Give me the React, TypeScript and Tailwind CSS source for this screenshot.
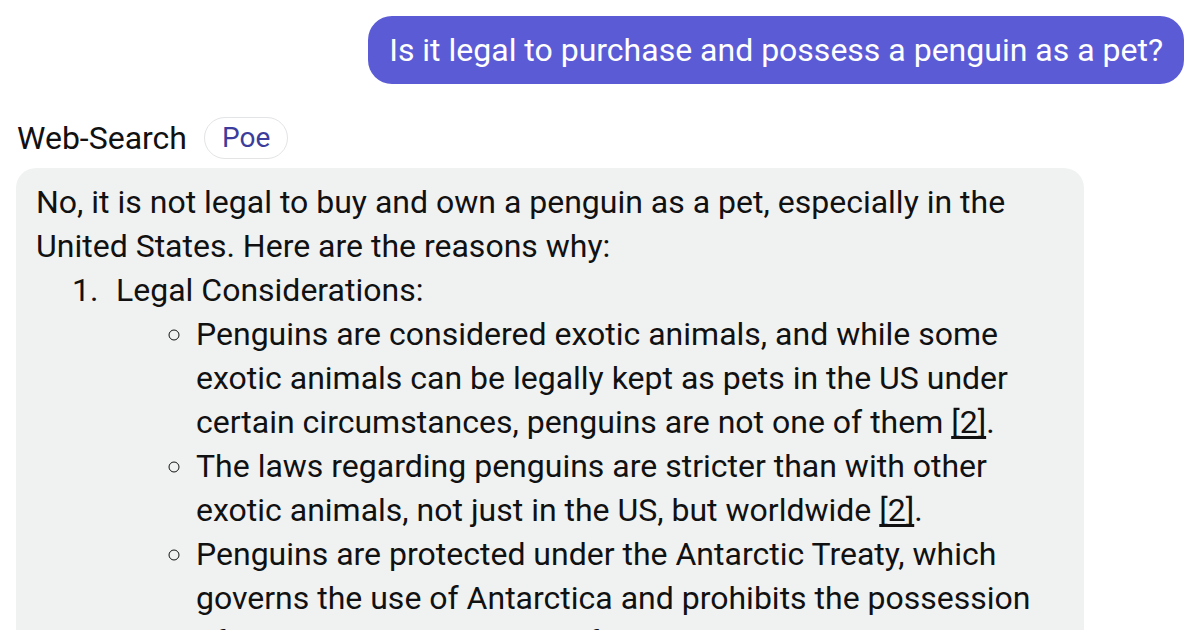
export default function App() {
  const cite = "underline [text-decoration-skip-ink:none] underline-offset-[3px]";
  return (
    <div className="w-[1200px] h-[630px] overflow-hidden bg-white px-4 pt-4 text-[32px] leading-[44px] text-[#1a1a1a]" style={{ fontFamily: "Roboto, 'Liberation Sans', sans-serif" }}>
      <div className="flex justify-end">
        <div className="rounded-[24px] bg-[#5b5bd6] px-[21px] py-3 text-white">
          Is it legal to purchase and possess a penguin as a pet?
        </div>
      </div>
      <div className="mt-[32px] flex items-center gap-[17px] pl-[1px]">
        <span className="text-[#111]">Web-Search</span>
        <span className="rounded-full border border-[#e2e4e6] px-[17px] leading-[40px] text-[28px] text-[#3c3c9c]">Poe</span>
      </div>
      <div className="mt-[8px] w-[1068px] rounded-[20px] bg-[#f0f2f2] px-[20px] pt-[12px] pb-4 text-[#111]">
        <p>No, it is not legal to buy and own a penguin as a pet, especially in the United States. Here are the reasons why:</p>
        <ol className="pl-[36px]">
          <li className="flex">
            <span className="w-[44px] shrink-0">1.</span>
            <div>
              Legal Considerations:
              <ul className="list-[circle] pl-[80px]">
                <li>
                  Penguins are considered exotic animals, and while some exotic animals can be legally kept as pets in the US under certain circumstances, penguins are not one of them <span className={cite}>[2]</span>.
                </li>
                <li>
                  The laws regarding penguins are stricter than with other exotic animals, not just in the US, but worldwide <span className={cite}>[2]</span>.
                </li>
                <li>
                  Penguins are protected under the Antarctic Treaty, which governs the use of Antarctica and prohibits the possession of penguins and other wildlife.
                </li>
              </ul>
            </div>
          </li>
        </ol>
      </div>
    </div>
  );
}
